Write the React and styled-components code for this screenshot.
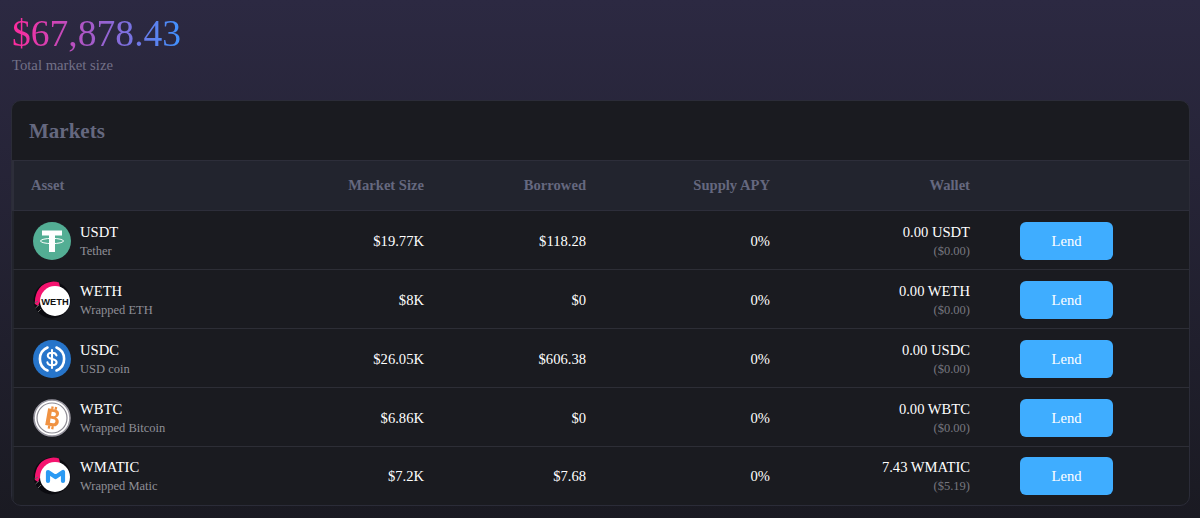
import React from 'react';
import styled, { createGlobalStyle } from 'styled-components';

const markets = [
  { symbol: 'USDT', name: 'Tether', size: '$19.77K', borrowed: '$118.28', apy: '0%', wallet: '0.00 USDT', usd: '($0.00)', icon: 'usdt' },
  { symbol: 'WETH', name: 'Wrapped ETH', size: '$8K', borrowed: '$0', apy: '0%', wallet: '0.00 WETH', usd: '($0.00)', icon: 'weth' },
  { symbol: 'USDC', name: 'USD coin', size: '$26.05K', borrowed: '$606.38', apy: '0%', wallet: '0.00 USDC', usd: '($0.00)', icon: 'usdc' },
  { symbol: 'WBTC', name: 'Wrapped Bitcoin', size: '$6.86K', borrowed: '$0', apy: '0%', wallet: '0.00 WBTC', usd: '($0.00)', icon: 'wbtc' },
  { symbol: 'WMATIC', name: 'Wrapped Matic', size: '$7.2K', borrowed: '$7.68', apy: '0%', wallet: '7.43 WMATIC', usd: '($5.19)', icon: 'wmatic' },
];

// pink and black crescent behind the wrapped tokens
const Swoosh = () => (
  <>
    <circle cx="19" cy="19" r="18.5" fill="#0b0b10" />
    <path d="M3 14A18 18 0 0 1 26 1.5L27 6L10 14L5 25L2 23Q1.5 18 3 14Z" fill="#f5136f" />
    <path d="M1.5 22L5 20M2.5 27L6 24M5 31L8 28" stroke="#666" strokeWidth="1" />
  </>
);

const CoinIcon = ({ type }) => {
  if (type === 'usdt') {
    return (
      <svg width="38" height="38" viewBox="0 0 38 38">
        <circle cx="19" cy="19" r="19" fill="#53ae94" />
        <ellipse cx="19" cy="19" rx="11.5" ry="2.6" fill="none" stroke="#fff" strokeWidth="1" />
        <path d="M9 8.5H29V13.5H22V30H16V13.5H9Z" fill="#fff" />
      </svg>
    );
  }
  if (type === 'weth') {
    return (
      <svg width="38" height="38" viewBox="0 0 38 38">
        <Swoosh />
        <circle cx="22" cy="20" r="15" fill="#fff" />
        <text x="22" y="23.5" textAnchor="middle" fontFamily="Liberation Sans, sans-serif" fontWeight="700" fontSize="9.3" fill="#111">WETH</text>
      </svg>
    );
  }
  if (type === 'usdc') {
    return (
      <svg width="38" height="38" viewBox="0 0 38 38">
        <circle cx="19" cy="19" r="19" fill="#2775ca" />
        <path d="M14.5 7.5A12.5 12.5 0 0 0 14.5 30.5M23.5 7.5A12.5 12.5 0 0 1 23.5 30.5" fill="none" stroke="#fff" strokeWidth="2.6" strokeLinecap="round" />
        <path d="M23.5 15.5C23 13.5 21.5 12.8 19 12.8C16.3 12.8 14.8 14 14.8 15.8C14.8 20 23.6 18 23.6 22.3C23.6 24.2 21.8 25.3 19 25.3C16.3 25.3 14.8 24.3 14.4 22.4M19 10V28" fill="none" stroke="#fff" strokeWidth="2.1" strokeLinecap="round" />
      </svg>
    );
  }
  if (type === 'wbtc') {
    return (
      <svg width="38" height="38" viewBox="0 0 38 38">
        <circle cx="19" cy="19" r="18" fill="#fff" stroke="#9a98a2" strokeWidth="1.6" />
        <circle cx="19" cy="19" r="15" fill="#fff" stroke="#8d8b94" strokeWidth="1.2" />
        <path transform="rotate(10 19 19)" d="M13.5 10H20.5C23.8 10 25.2 12 25.2 14C25.2 16 24 17.4 22.6 17.9C25 18.3 26.4 20 26.4 22.2C26.4 25 24.2 27 21 27H13.5ZM17.7 13V17H20.4C21.5 17 22.2 16.1 22.2 15C22.2 13.9 21.5 13 20.4 13ZM17.7 19.8V24H21C22.2 24 23 23.1 23 21.9C23 20.7 22.2 19.8 21 19.8ZM16.5 7.5H18.8V10H16.5ZM20 7.5H22.3V10H20ZM16.5 27H18.8V30H16.5ZM20 27H22.3V30H20Z" fill="#f09242" fillRule="evenodd" />
      </svg>
    );
  }
  return (
    <svg width="38" height="38" viewBox="0 0 38 38">
      <Swoosh />
      <circle cx="22" cy="20" r="15" fill="#fff" />
      <path d="M15 24V15L22.5 20L30 15V24" fill="none" stroke="#2b9af3" strokeWidth="4.2" strokeLinejoin="round" strokeLinecap="round" />
    </svg>
  );
};

const App = () => (
  <Page>
    <GlobalStyle />
    <Summary>
      <Total>$67,878.43</Total>
      <TotalLabel>Total market size</TotalLabel>
    </Summary>
    <Card>
      <CardTitle>Markets</CardTitle>
      <HeaderRow>
        <HeaderCell>Asset</HeaderCell>
        <HeaderCell $right>Market Size</HeaderCell>
        <HeaderCell $right>Borrowed</HeaderCell>
        <HeaderCell $right>Supply APY</HeaderCell>
        <HeaderCell $right>Wallet</HeaderCell>
        <span />
      </HeaderRow>
      {markets.map((market) => (
        <Row key={market.symbol}>
          <Asset>
            <CoinIcon type={market.icon} />
            <div>
              <Primary>{market.symbol}</Primary>
              <Secondary>{market.name}</Secondary>
            </div>
          </Asset>
          <Value>{market.size}</Value>
          <Value>{market.borrowed}</Value>
          <Value>{market.apy}</Value>
          <Value>
            <Primary>{market.wallet}</Primary>
            <Usd>{market.usd}</Usd>
          </Value>
          <Action>
            <LendButton>Lend</LendButton>
          </Action>
        </Row>
      ))}
    </Card>
  </Page>
);

const GlobalStyle = createGlobalStyle`
  html, body {
    margin: 0;
    padding: 0;
    background: #1a1a22;
  }
  * {
    box-sizing: border-box;
  }
`;

const Page = styled.div`
  width: 1200px;
  height: 518px;
  overflow: hidden;
  padding: 12px 10px 0 11px;
  background: linear-gradient(180deg, #2c2942 0%, #1a1a22 100%);
  font-family: "Liberation Serif", serif;
`;

const Summary = styled.div`
  padding-left: 1px;
  height: 88px;
`;

const Total = styled.div`
  display: inline-block;
  font-size: 37.6px;
  line-height: 43px;
  background: linear-gradient(90deg, #ff2a9c 0%, #3f92ff 100%);
  -webkit-background-clip: text;
  background-clip: text;
  color: transparent;
`;

const TotalLabel = styled.div`
  font-size: 14.7px;
  line-height: 17px;
  margin-top: 2px;
  color: #737188;
`;

const Card = styled.div`
  height: 406px;
  background: #1a1b20;
  border: 1px solid #2b2c38;
  border-radius: 10px;
  overflow: hidden;
`;

const CardTitle = styled.h2`
  margin: 0;
  height: 59px;
  padding-left: 17px;
  font-size: 21px;
  line-height: 60px;
  font-weight: 700;
  color: #65687f;
`;

const columns = '199px 211px 162px 184px 200px 1fr';

const HeaderRow = styled.div`
  display: grid;
  grid-template-columns: ${columns};
  align-items: center;
  height: 51px;
  background: #22242e;
  border-top: 1px solid #2d2e3a;
  border-bottom: 1px solid #2d2e3a;
  border-left: 2px solid #2d2e3a;
`;

const HeaderCell = styled.div`
  font-size: 14.6px;
  font-weight: 700;
  color: #65687f;
  padding-left: ${(props) => (props.$right ? '0' : '17px')};
  text-align: ${(props) => (props.$right ? 'right' : 'left')};
`;

const Row = styled.div`
  display: grid;
  grid-template-columns: ${columns};
  align-items: center;
  height: 59px;
  padding-top: 2px;
  border-bottom: 1px solid #2d2e36;
  border-left: 2px solid #22242c;

  &:last-child {
    height: 58px;
    padding-top: 0;
    border-bottom: none;
  }
`;

const Asset = styled.div`
  display: flex;
  align-items: center;
  gap: 9px;
  padding-left: 19px;
`;

const Primary = styled.div`
  font-size: 14.6px;
  line-height: 17px;
  color: #fff;
`;

const Secondary = styled.div`
  font-size: 12.5px;
  line-height: 14px;
  margin-top: 3px;
  color: #8f8f97;
`;

const Usd = styled(Secondary)`
  color: #77777f;
`;

const Value = styled.div`
  font-size: 14.6px;
  color: #fff;
  text-align: right;
`;

const Action = styled.div`
  padding-left: 50px;
`;

const LendButton = styled.button`
  display: block;
  width: 93px;
  height: 38px;
  border: none;
  border-radius: 6px;
  background: #3fadff;
  color: #fff;
  font-family: inherit;
  font-size: 14.6px;
  cursor: pointer;
`;

export default App;
